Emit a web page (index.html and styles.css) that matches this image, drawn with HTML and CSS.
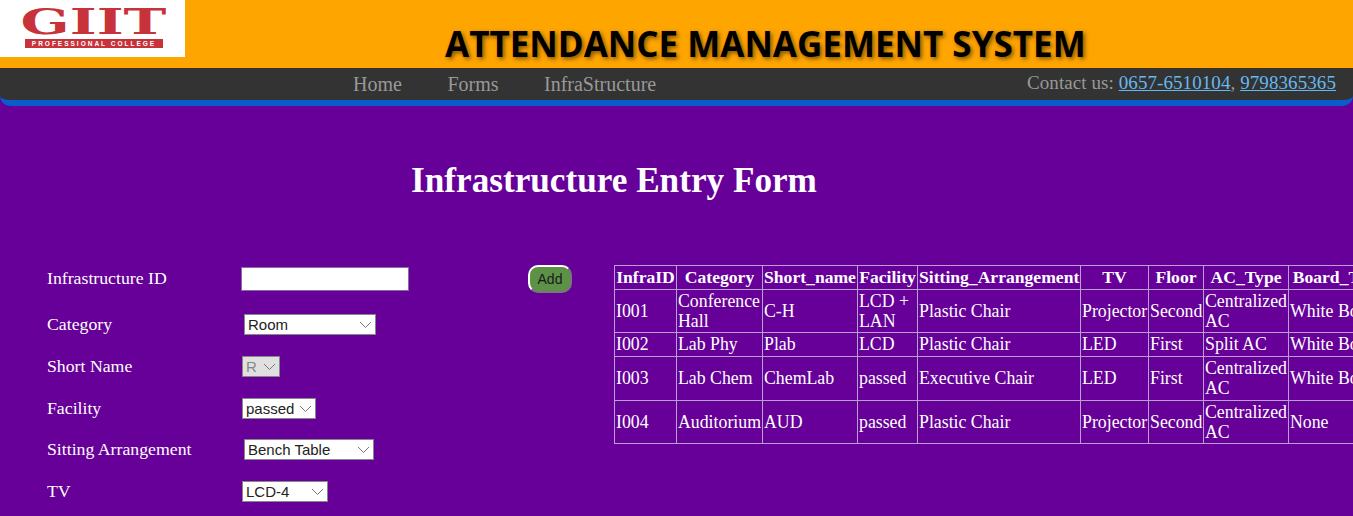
FILE: index.html
```html
<!DOCTYPE html>
<html lang="en">
    <head>
        <meta charset="UTF-8">
        <meta name="viewport" content="width=device-width, initial-scale=1.0">
        <title>Infrastructure Entry Form</title>
        <link rel="stylesheet" href="styles.css">
    </head>
    <body>
        <header class="top">
            <div class="logo">
                <div class="logo-name">GIIT</div>
                <div class="logo-sub">PROFESSIONAL COLLEGE</div>
            </div>
            <div class="site-title">ATTENDANCE MANAGEMENT SYSTEM</div>
        </header>
        <nav class="menu">
            <div class="menu-links">
                <a href="#">Home</a>
                <a href="#">Forms</a>
                <a href="#">InfraStructure</a>
            </div>
            <div class="contact">Contact us: <a href="#">0657-6510104</a>, <a href="#">9798365365</a></div>
        </nav>
        <h1 class="page-title">Infrastructure Entry Form</h1>
        <main class="content">
            <form class="entry-form">
                <div class="row row-id">
                    <label for="infra">Infrastructure ID</label>
                    <input type="text" id="infra" class="id-input">
                    <button type="button" class="add-btn">Add</button>
                </div>
                <div class="row row-category">
                    <label for="category">Category</label>
                    <select id="category" class="sel-category"><option>Room</option></select>
                </div>
                <div class="row row-short">
                    <label for="short">Short Name</label>
                    <select id="short" class="sel-short" disabled><option>R</option></select>
                </div>
                <div class="row row-facility">
                    <label for="facility">Facility</label>
                    <select id="facility" class="sel-facility"><option>passed</option></select>
                </div>
                <div class="row row-sitting">
                    <label for="sitting">Sitting Arrangement</label>
                    <select id="sitting" class="sel-sitting"><option>Bench Table</option></select>
                </div>
                <div class="row row-tv">
                    <label for="tv">TV</label>
                    <select id="tv" class="sel-tv"><option>LCD-4</option></select>
                </div>
            </form>
            <div class="table-clip">
                <table class="infra-table">
                    <thead>
                        <tr>
                            <th>InfraID</th><th>Category</th><th>Short_name</th><th>Facility</th><th>Sitting_Arrangement</th><th>TV</th><th>Floor</th><th>AC_Type</th><th>Board_Type</th>
                        </tr>
                    </thead>
                    <tbody>
                        <tr>
                            <td>I001</td><td>Conference Hall</td><td>C-H</td><td>LCD + LAN</td><td>Plastic Chair</td><td>Projector</td><td>Second</td><td>Centralized AC</td><td>White Board</td>
                        </tr>
                        <tr>
                            <td>I002</td><td>Lab Phy</td><td>Plab</td><td>LCD</td><td>Plastic Chair</td><td>LED</td><td>First</td><td>Split AC</td><td>White Board</td>
                        </tr>
                        <tr>
                            <td>I003</td><td>Lab Chem</td><td>ChemLab</td><td>passed</td><td>Executive Chair</td><td>LED</td><td>First</td><td>Centralized AC</td><td>White Board</td>
                        </tr>
                        <tr>
                            <td>I004</td><td>Auditorium</td><td>AUD</td><td>passed</td><td>Plastic Chair</td><td>Projector</td><td>Second</td><td>Centralized AC</td><td>None</td>
                        </tr>
                    </tbody>
                </table>
            </div>
        </main>
    </body>
</html>
```

FILE: styles.css
```css
* {
    box-sizing: border-box;
    margin: 0;
}

html, body {
    height: 516px;
    overflow: hidden;
}

body {
    background-color: #660099;
    color: white;
    font-family: "Liberation Serif", serif;
}

.top {
    height: 68px;
    background-color: orange;
    display: flex;
}

.logo {
    width: 185px;
    height: 57px;
    background-color: white;
    padding: 8px 0 0 22px;
    display: flex;
    flex-direction: column;
    align-items: flex-start;
}

.logo-name {
    width: 143px;
    height: 27px;
    color: #c8323a;
    font-family: "DejaVu Serif", serif;
    font-weight: bold;
    font-size: 36px;
    line-height: 27px;
    text-align: center;
    transform: scaleX(1.6);
}

.logo-sub {
    width: 138px;
    height: 9px;
    margin: 4px 0 0 3px;
    background-color: #c8323a;
    color: white;
    font-family: "Liberation Sans", sans-serif;
    font-weight: bold;
    font-size: 6.5px;
    line-height: 9px;
    letter-spacing: 2px;
    text-align: center;
    white-space: nowrap;
}

.site-title {
    margin: 23px 0 0 260px;
    color: black;
    font-family: "Open Sans", sans-serif;
    font-weight: bold;
    font-size: 35px;
    line-height: 42px;
    white-space: nowrap;
    text-shadow: 2px 2px 4px rgba(0, 0, 0, 0.5);
}

.menu {
    height: 38px;
    background-color: #333;
    border-bottom: 6px solid #0a5ccc;
    border-radius: 0 0 10px 10px;
    display: flex;
    justify-content: space-between;
    color: #999;
    font-size: 19px;
}

.menu-links {
    margin-left: 353px;
    padding-top: 5px;
    display: flex;
    gap: 45.5px;
    font-size: 20px;
}

.menu-links a {
    color: #999;
    text-decoration: none;
}

.contact {
    margin-right: 17px;
    padding-top: 4px;
    letter-spacing: 0.08px;
}

.contact a {
    color: #66b8f0;
}

.page-title {
    width: 1228px;
    margin-top: 54px;
    text-align: center;
    font-size: 35.2px;
    line-height: 42px;
}

.content {
    margin-top: 63px;
    display: flex;
    align-items: flex-start;
}

.entry-form {
    width: 614px;
    flex: none;
    padding-left: 47px;
    font-size: 17.75px;
}

.row {
    display: flex;
    align-items: center;
}

.row label {
    width: 194px;
    flex: none;
}

.row-id { height: 28px; }
.row-id label { margin-bottom: 2px; }
.row-category { height: 21px; margin-top: 21px; }
.row-short { height: 21px; margin-top: 21px; }
.row-facility { height: 21px; margin-top: 21px; }
.row-sitting { height: 21px; margin-top: 20px; }
.row-tv { height: 21px; margin-top: 21px; }

.id-input {
    width: 168px;
    height: 24px;
    border: 1px solid #8a6aa8;
    background-color: white;
}

.add-btn {
    width: 44px;
    height: 28px;
    margin-left: 119px;
    padding: 0;
    background-color: #5c9147;
    color: #1a1a1a;
    font-family: "Liberation Sans", sans-serif;
    font-size: 14px;
    border: 2px solid white;
    border-right-color: #777;
    border-bottom-color: #777;
    border-radius: 10px;
}

select {
    height: 21px;
    padding: 0 0 0 3px;
    appearance: none;
    border: 1px solid #888;
    border-radius: 0;
    background-color: white;
    background-image: url("data:image/svg+xml,%3Csvg xmlns='http://www.w3.org/2000/svg' width='13' height='7'%3E%3Cpath d='M1 1l5.5 5.5 5.5-5.5' fill='none' stroke='%23777'/%3E%3C/svg%3E");
    background-repeat: no-repeat;
    background-position: right 3px center;
    color: #222;
    font-family: "Liberation Sans", sans-serif;
    font-size: 15px;
}

select:disabled {
    background-color: #e0e0e0;
    color: #888;
    opacity: 1;
}

.sel-category { width: 132px; margin-left: 3px; }
.sel-short { width: 38px; margin-left: 1px; }
.sel-facility { width: 74px; margin-left: 1px; }
.sel-sitting { width: 130px; margin-left: 3px; }
.sel-tv { width: 86px; margin-left: 1px; }

.table-clip {
    width: 739px;
    flex: none;
    overflow: hidden;
}

.infra-table {
    width: 775px;
    table-layout: fixed;
    border-collapse: collapse;
    font-size: 17.8px;
    line-height: 20px;
}

.infra-table th,
.infra-table td {
    border: 1px solid #b9a0d0;
    padding: 1px;
}

.infra-table th {
    height: 24px;
    padding-bottom: 2px;
    font-size: 17.6px;
}

.infra-table th:nth-child(1) { width: 62px; }
.infra-table th:nth-child(2) { width: 86px; }
.infra-table th:nth-child(3) { width: 95px; }
.infra-table th:nth-child(4) { width: 60px; }
.infra-table th:nth-child(5) { width: 163px; }
.infra-table th:nth-child(6) { width: 68px; }
.infra-table th:nth-child(7) { width: 55px; }
.infra-table th:nth-child(8) { width: 85px; }
.infra-table th:nth-child(9) { width: 101px; }

.infra-table tbody tr:nth-child(2) td { height: 24px; padding-bottom: 2px; }
.infra-table tbody tr:nth-child(3) td { height: 44px; padding-bottom: 2px; }
.infra-table tbody tr:nth-child(4) td { height: 43px; }
```
